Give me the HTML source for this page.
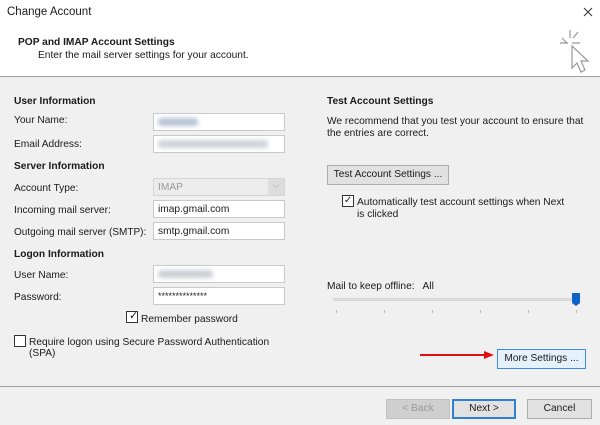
<!DOCTYPE html>
<html><head><meta charset="utf-8"><style>
*{box-sizing:border-box;margin:0;padding:0}
body{width:600px;height:425px;overflow:hidden;background:#f0f0f0;font-family:"Liberation Sans",sans-serif;font-size:10.2px;color:#1a1a1a;position:relative}
.a{position:absolute;white-space:nowrap;line-height:13px;margin-top:2px}
.b{font-weight:bold}
.in{position:absolute;left:153px;width:132px;height:18px;background:#fff;border:1px solid #c9c9c9;padding:2px 4px;line-height:13px}
.blur{position:absolute;top:4px;left:4px;height:8px;background:#b8c4d4;filter:blur(2px);border-radius:3px}
.cb{position:absolute;width:12px;height:12px;border:1px solid #333;background:#fff}
.btn{position:absolute;height:20px;border:1px solid #adadad;background:#e1e1e1;text-align:center;line-height:18px}
</style></head><body>
<div style="position:absolute;left:0;top:0;width:600px;height:77px;background:#fff;border-bottom:1px solid #a0a0a0"></div>
<div class="a" style="left:7px;top:4px;font-size:11.5px">Change Account</div>
<svg style="position:absolute;left:583px;top:7px" width="10" height="10"><path d="M1 1l8 8M9 1l-8 8" stroke="#333" stroke-width="1"/></svg>
<div class="a b" style="left:18px;top:34px">POP and IMAP Account Settings</div>
<div class="a" style="left:38px;top:47px">Enter the mail server settings for your account.</div>
<svg style="position:absolute;left:558px;top:28px" width="34" height="46" viewBox="0 0 34 46" fill="none" stroke="#999" stroke-width="1.2">
<path d="M12 2v8M4 10l5 5M2 15h8M20 4l-5 6M14 15h8"/>
<path d="M14 18v22l5-5 4 9 4-2-4-9h7z" fill="#fff"/>
</svg>

<div class="a b" style="left:14px;top:93px">User Information</div>
<div class="a" style="left:14px;top:112px">Your Name:</div>
<div class="in" style="top:113px"><div class="blur" style="width:40px"></div></div>
<div class="a" style="left:14px;top:136px">Email Address:</div>
<div class="in" style="top:135px"><div class="blur" style="width:110px;background:#d0d4da"></div></div>
<div class="a b" style="left:14px;top:158px">Server Information</div>
<div class="a" style="left:14px;top:180px">Account Type:</div>
<div class="in" style="top:178px;background:#ececec;color:#999;border-color:#d5d5d5">IMAP<div style="position:absolute;right:0;top:0;width:16px;height:16px;background:#ddd;color:#999;text-align:center;font-size:9px">⌵</div></div>
<div class="a" style="left:14px;top:202px">Incoming mail server:</div>
<div class="in" style="top:200px">imap.gmail.com</div>
<div class="a" style="left:14px;top:224px;font-size:10px">Outgoing mail server (SMTP):</div>
<div class="in" style="top:222px">smtp.gmail.com</div>
<div class="a b" style="left:14px;top:246px">Logon Information</div>
<div class="a" style="left:14px;top:267px">User Name:</div>
<div class="in" style="top:265px"><div class="blur" style="width:55px;background:#ccd0d6"></div></div>
<div class="a" style="left:14px;top:289px">Password:</div>
<div class="in" style="top:287px;font-size:9px">**************</div>
<div class="cb" style="left:126px;top:311px"></div><div class="a" style="left:126px;top:308px;font-size:11px">&nbsp;✓</div>
<div class="a" style="left:141px;top:311px">Remember password</div>
<div class="cb" style="left:14px;top:335px"></div>
<div class="a" style="left:29px;top:334px">Require logon using Secure Password Authentication</div>
<div class="a" style="left:29px;top:345px">(SPA)</div>

<div class="a b" style="left:327px;top:93px">Test Account Settings</div>
<div class="a" style="left:327px;top:113px">We recommend that you test your account to ensure that</div>
<div class="a" style="left:327px;top:125px">the entries are correct.</div>
<div class="btn" style="left:327px;top:165px;width:122px">Test Account Settings ...</div>
<div class="cb" style="left:342px;top:195px"></div><div class="a" style="left:341px;top:192px">&nbsp;✓</div>
<div class="a" style="left:357px;top:194px">Automatically test account settings when Next</div>
<div class="a" style="left:357px;top:206px">is clicked</div>
<div class="a" style="left:327px;top:278px">Mail to keep offline:&nbsp;&nbsp; All</div>
<div style="position:absolute;left:333px;top:298px;width:245px;height:3px;background:#e0e0e0;border:1px solid #d6d6d6"></div>
<svg style="position:absolute;left:571px;top:292px" width="10" height="15"><path d="M1 1h8v10l-4 3-4-3z" fill="#0a64c8"/></svg>
<div style="position:absolute;top:310px;left:336px;width:1px;height:3px;background:#bbb"></div>
<div style="position:absolute;top:310px;left:384px;width:1px;height:3px;background:#bbb"></div>
<div style="position:absolute;top:310px;left:432px;width:1px;height:3px;background:#bbb"></div>
<div style="position:absolute;top:310px;left:480px;width:1px;height:3px;background:#bbb"></div>
<div style="position:absolute;top:310px;left:528px;width:1px;height:3px;background:#bbb"></div>
<div style="position:absolute;top:310px;left:576px;width:1px;height:3px;background:#bbb"></div>
<svg style="position:absolute;left:418px;top:350px" width="80" height="10"><path d="M2 5h66" stroke="#e01010" stroke-width="2"/><path d="M66 1l10 4-10 4z" fill="#e01010"/></svg>
<div class="btn" style="left:497px;top:349px;width:89px;border-color:#3c8ce6;background:#e5f1fb">More Settings ...</div>

<div style="position:absolute;left:0;top:386px;width:600px;height:1px;background:#a0a0a0"></div>
<div class="btn" style="left:386px;top:399px;width:64px;color:#9a9a9a;background:#cfcfcf;border-color:#bfbfbf">&lt; Back</div>
<div class="btn" style="left:452px;top:399px;width:64px;border:2px solid #2f7fd8;line-height:16px">Next &gt;</div>
<div class="btn" style="left:527px;top:399px;width:65px">Cancel</div>
</body></html>
